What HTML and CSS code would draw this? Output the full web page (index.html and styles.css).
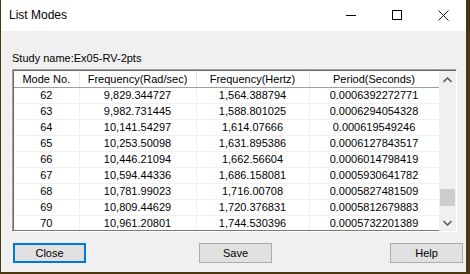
FILE: index.html
```html
<!DOCTYPE html>
<html>
<head>
<meta charset="utf-8">
<link rel="stylesheet" href="styles.css">
</head>
<body>
<div class="window">
  <div class="titlebar">
    <span class="title">List Modes</span>
    <div class="caption">
      <div class="cbtn"><svg width="10" height="10" viewBox="0 0 10 10"><path d="M0 5.5H10" stroke="#000" stroke-width="1"/></svg></div>
      <div class="cbtn"><svg width="10" height="10" viewBox="0 0 10 10"><rect x="0.5" y="0.5" width="9" height="9" fill="none" stroke="#000" stroke-width="1"/></svg></div>
      <div class="cbtn"><svg width="11" height="11" viewBox="0 0 11 11"><path d="M0.5 0.5L10.5 10.5M10.5 0.5L0.5 10.5" stroke="#000" stroke-width="0.9"/></svg></div>
    </div>
  </div>
  <div class="content">
    <div class="study">Study name:Ex05-RV-2pts</div>
    <div class="list">
      <div class="grid">
        <table>
          <colgroup><col class="c1"><col class="c2"><col class="c3"><col class="c4"></colgroup>
          <thead>
            <tr><th>Mode No.</th><th>Frequency(Rad/sec)</th><th>Frequency(Hertz)</th><th>Period(Seconds)</th></tr>
          </thead>
          <tbody>
            <tr><td>62</td><td>9,829.344727</td><td>1,564.388794</td><td>0.0006392272771</td></tr>
            <tr><td>63</td><td>9,982.731445</td><td>1,588.801025</td><td>0.0006294054328</td></tr>
            <tr><td>64</td><td>10,141.54297</td><td>1,614.07666</td><td>0.000619549246</td></tr>
            <tr><td>65</td><td>10,253.50098</td><td>1,631.895386</td><td>0.0006127843517</td></tr>
            <tr><td>66</td><td>10,446.21094</td><td>1,662.56604</td><td>0.0006014798419</td></tr>
            <tr><td>67</td><td>10,594.44336</td><td>1,686.158081</td><td>0.0005930641782</td></tr>
            <tr><td>68</td><td>10,781.99023</td><td>1,716.00708</td><td>0.0005827481509</td></tr>
            <tr><td>69</td><td>10,809.44629</td><td>1,720.376831</td><td>0.0005812679883</td></tr>
            <tr><td>70</td><td>10,961.20801</td><td>1,744.530396</td><td>0.0005732201389</td></tr>
          </tbody>
        </table>
      </div>
      <div class="scrollbar">
        <div class="arrow"><svg width="9" height="6" viewBox="0 0 9 6"><path d="M0.5 5L4.5 1L8.5 5" fill="none" stroke="#606060" stroke-width="1.6"/></svg></div>
        <div class="track"><div class="thumb"></div></div>
        <div class="arrow"><svg width="9" height="6" viewBox="0 0 9 6"><path d="M0.5 1L4.5 5L8.5 1" fill="none" stroke="#606060" stroke-width="1.6"/></svg></div>
      </div>
    </div>
    <div class="buttons">
      <div class="btn focused">Close</div>
      <div class="btn save">Save</div>
      <div class="btn help">Help</div>
    </div>
  </div>
</div>
</body>
</html>
```
FILE: styles.css
```css
html, body {
  margin: 0;
  padding: 0;
}
body {
  width: 470px;
  height: 274px;
  background: #4b3614;
  overflow: hidden;
  font-family: "Liberation Sans", Arial, sans-serif;
}
.window {
  margin-left: 1px;
  width: 465px;
  height: 272px;
  background: #f0f0f0;
  display: flex;
  flex-direction: column;
}
.titlebar {
  height: 31px;
  background: #fff;
  display: flex;
  align-items: center;
  justify-content: space-between;
}
.title {
  font-size: 12px;
  color: #000;
  padding-left: 8px;
  padding-bottom: 1px;
}
.caption {
  display: flex;
  align-self: stretch;
}
.cbtn {
  width: 46px;
  display: flex;
  align-items: center;
  justify-content: center;
  padding-bottom: 1px;
}
.content {
  flex: 1;
  padding: 0 3px 0 11px;
  display: flex;
  flex-direction: column;
}
.study {
  font-size: 11px;
  margin-top: 21px;
  height: 13px;
  line-height: 13px;
  color: #000;
}
.list {
  margin-top: 4px;
  width: 443px;
  height: 161px;
  display: flex;
  border-top: 1px solid #a0a0a0;
  border-left: 1px solid #a0a0a0;
  border-right: 1px solid #fff;
  border-bottom: 1px solid #fff;
  box-shadow: inset 1px 1px 0 #696969;
}
.grid {
  width: 425px;
  margin: 1px 0 0 1px;
  background: #fff;
  border-bottom: 1px solid #7a7a7a;
  overflow: hidden;
}
table {
  border-collapse: collapse;
  table-layout: fixed;
  width: 425px;
  font-size: 11px;
  color: #000;
}
col.c1 { width: 65px; }
col.c2 { width: 117px; }
col.c3 { width: 113px; }
col.c4 { width: 130px; }
th {
  font-weight: normal;
  height: 16px;
  padding: 0;
  border-right: 1px solid #e5e5e5;
  border-bottom: 1px solid #a0a0a0;
  text-align: center;
  line-height: 16px;
}
td {
  height: 15px;
  padding: 0;
  text-align: center;
  line-height: 15px;
  border-right: 1px solid #f0f0f0;
  border-bottom: 1px solid #f0f0f0;
}
.scrollbar {
  width: 17px;
  margin-top: 1px;
  background: #f0f0f0;
  display: flex;
  flex-direction: column;
}
.arrow {
  height: 17px;
  display: flex;
  align-items: center;
  justify-content: center;
}
.track {
  flex: 1;
  display: flex;
  flex-direction: column;
  justify-content: flex-end;
}
.thumb {
  height: 17px;
  margin: 0 1px 8px 1px;
  background: #cdcdcd;
}
.buttons {
  margin-top: 11px;
  display: flex;
  padding-left: 1px;
}
.btn {
  width: 71px;
  height: 18px;
  border: 1px solid #adadad;
  background: #e1e1e1;
  font-size: 11px;
  display: flex;
  align-items: center;
  justify-content: center;
  color: #000;
}
.btn.focused {
  width: 69px;
  height: 16px;
  border: 2px solid #0078d7;
}
.btn.save {
  margin-left: 113px;
}
.btn.help {
  margin-left: 118px;
}
```
